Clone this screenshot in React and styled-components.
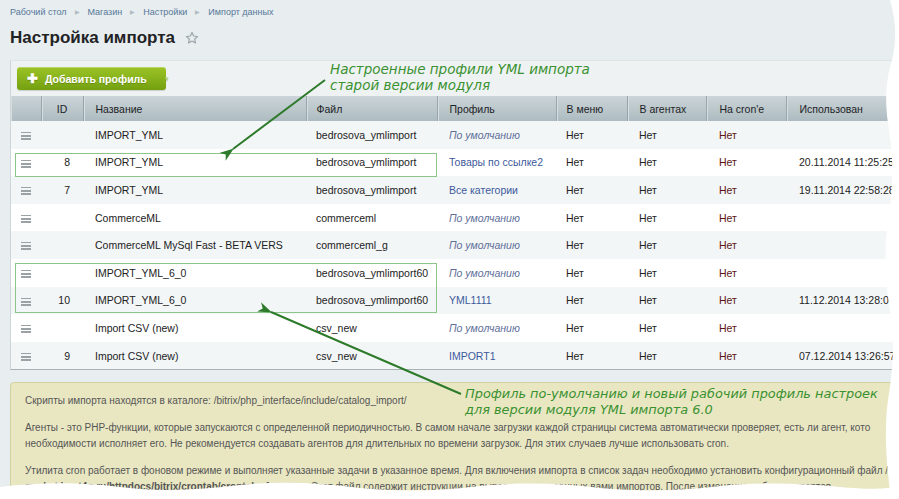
import styled, { createGlobalStyle } from 'styled-components';

const GlobalStyle = createGlobalStyle`
  html, body {
    margin: 0;
    padding: 0;
    background: #ffffff;
  }
  body {
    font-family: "Liberation Sans", Arial, sans-serif;
  }
`;

const Page = styled.div`
  position: relative;
  width: 899px;
  height: 499px;
  overflow: hidden;
  background: #e8edef;
  padding: 0 0 0 10px;
  box-sizing: border-box;
`;

const Breadcrumbs = styled.div`
  display: flex;
  align-items: center;
  gap: 8px;
  height: 23px;
  font-size: 9px;
  color: #56789a;
`;

const Sep = styled.span`
  color: #b0bbc2;
  font-size: 6px;
`;

const TitleRow = styled.div`
  display: flex;
  align-items: center;
  gap: 10px;
  height: 30px;

  h1 {
    margin: 0;
    font-size: 17px;
    font-weight: bold;
    color: #1f2326;
  }
`;

const Panel = styled.div`
  margin-top: 7px;
  border-left: 1px solid #cdd5d8;
  border-top: 1px solid #dde3e6;
  border-bottom: 1px solid #a9b3b7;
  background: #eef2f3;
`;

const Toolbar = styled.div`
  display: flex;
  align-items: center;
  height: 35px;
  padding-left: 6px;
`;

const AddButton = styled.button`
  display: flex;
  align-items: center;
  gap: 7px;
  height: 23px;
  width: 149px;
  padding: 0 0 0 10px;
  border: none;
  border-radius: 3px;
  background: linear-gradient(#9cc426, #74a010);
  box-shadow: inset 0 1px 0 rgba(255,255,255,0.3), 0 1px 1px rgba(0,0,0,0.15);
  color: #fff;
  font-family: "Liberation Sans", Arial, sans-serif;
  font-weight: bold;
  font-size: 10.5px;
  white-space: nowrap;
  text-shadow: 0 1px 0 rgba(0,0,0,0.2);

  .plus {
    font-size: 13px;
    line-height: 1;
  }

  .caret {
    margin-left: 10px;
    color: #b5d36a;
    font-size: 6px;
  }
`;

const Table = styled.table`
  width: 900px;
  border-collapse: collapse;
  table-layout: fixed;
  font-size: 10.5px;
  color: #222;
`;

const Th = styled.th`
  height: 25px;
  padding: 0 0 0 ${(p) => p.$pl ?? 12}px;
  text-align: ${(p) => p.$align || 'left'};
  font-weight: normal;
  color: #1d2326;
  background: linear-gradient(#cbd4d8, #adbbc0);
  border-right: 1px solid #98a6ab;
  box-shadow: inset 1px 0 0 #d6dee1;
`;

const Row = styled.tr`
  background: ${(p) => (p.$shade ? '#f3f6f7' : '#ffffff')};
`;

const Td = styled.td`
  height: 27.6px;
  padding: 0 0 0 ${(p) => p.$pl ?? 12}px;
  padding-right: ${(p) => p.$pr ?? 0}px;
  text-align: ${(p) => p.$align || 'left'};
  white-space: nowrap;
  overflow: hidden;
  color: ${(p) => p.$color || '#222'};
  font-style: ${(p) => (p.$italic ? 'italic' : 'normal')};
`;

const Burger = styled.span`
  display: inline-block;
  width: 10px;
  height: 8px;
  background: linear-gradient(#9aa2a6 0 1.5px, transparent 1.5px 3.25px, #9aa2a6 3.25px 4.75px, transparent 4.75px 6.5px, #9aa2a6 6.5px 8px);
  vertical-align: middle;
`;

const Note = styled.div`
  margin: 12px 0 0 0;
  padding: 10px 0 0 14px;
  height: 130px;
  background: #e9e7c2;
  border: 1px solid #d2cfa0;
  border-radius: 4px;
  font-size: 10px;
  line-height: 16px;
  color: #555;
  white-space: nowrap;
  overflow: hidden;

  p {
    margin: 0 0 11px 0;
  }
`;

const Overlay = styled.svg`
  position: absolute;
  left: 0;
  top: 0;
  pointer-events: none;
`;

const Callout = styled.div`
  position: absolute;
  left: ${(p) => p.$x}px;
  top: ${(p) => p.$y}px;
  font-family: "DejaVu Sans", sans-serif;
  font-style: italic;
  font-size: ${(p) => p.$size}px;
  line-height: 16px;
  color: #3a9130;
  white-space: nowrap;
`;

const Frame = styled.div`
  position: absolute;
  left: ${(p) => p.$x}px;
  top: ${(p) => p.$y}px;
  width: ${(p) => p.$w}px;
  height: ${(p) => p.$h}px;
  border: 1px solid #8cc48a;
  pointer-events: none;
`;

const cols = [30, 42, 223, 131, 119, 71, 79, 80, 125];

const DEF = 'По умолчанию';
const rows = [
  { id: '', name: 'IMPORT_YML', file: 'bedrosova_ymlimport', prof: DEF, used: '' },
  { id: '8', name: 'IMPORT_YML', file: 'bedrosova_ymlimport', prof: 'Товары по ссылке2', used: '20.11.2014 11:25:25' },
  { id: '7', name: 'IMPORT_YML', file: 'bedrosova_ymlimport', prof: 'Все категории', used: '19.11.2014 22:58:28' },
  { id: '', name: 'CommerceML', file: 'commerceml', prof: DEF, used: '' },
  { id: '', name: 'CommerceML MySql Fast - BETA VERS', file: 'commerceml_g', prof: DEF, used: '' },
  { id: '', name: 'IMPORT_YML_6_0', file: 'bedrosova_ymlimport60', prof: DEF, used: '' },
  { id: '10', name: 'IMPORT_YML_6_0', file: 'bedrosova_ymlimport60', prof: 'YML1111', used: '11.12.2014 13:28:08' },
  { id: '', name: 'Import CSV (new)', file: 'csv_new', prof: DEF, used: '' },
  { id: '9', name: 'Import CSV (new)', file: 'csv_new', prof: 'IMPORT1', used: '07.12.2014 13:26:57' },
];

function Star() {
  return (
    <svg width="14" height="14" viewBox="0 0 24 24">
      <path
        d="M12 2.5l2.9 6.1 6.6.8-4.9 4.6 1.3 6.6L12 17.3l-5.9 3.3 1.3-6.6-4.9-4.6 6.6-.8z"
        fill="none"
        stroke="#9aa4aa"
        strokeWidth="2"
        strokeLinejoin="round"
      />
    </svg>
  );
}

function App() {
  return (
    <Page>
      <GlobalStyle />
      <Breadcrumbs>
        <span>Рабочий стол</span>
        <Sep>▶</Sep>
        <span>Магазин</span>
        <Sep>▶</Sep>
        <span>Настройки</span>
        <Sep>▶</Sep>
        <span>Импорт данных</span>
      </Breadcrumbs>
      <TitleRow>
        <h1>Настройка импорта</h1>
        <Star />
      </TitleRow>

      <Panel>
        <Toolbar>
          <AddButton>
            <span className="plus">✚</span>
            <span>Добавить профиль</span>
            <span className="caret">▼</span>
          </AddButton>
        </Toolbar>
        <Table>
          <colgroup>
            {cols.map((w, i) => (
              <col key={i} style={{ width: w }} />
            ))}
          </colgroup>
          <thead>
            <tr>
              <Th $pl={0} />
              <Th $pl={0} $align="center">ID</Th>
              <Th>Название</Th>
              <Th $pl={10}>Файл</Th>
              <Th>Профиль</Th>
              <Th $pl={10}>В меню</Th>
              <Th>В агентах</Th>
              <Th $pl={13}>На cron'e</Th>
              <Th $pl={13}>Использован</Th>
            </tr>
          </thead>
          <tbody>
            {rows.map((r, i) => (
              <Row key={i} $shade={i % 2 === 0}>
                <Td $pl={10}><Burger /></Td>
                <Td $pl={0} $pr={13} $align="right">{r.id}</Td>
                <Td>{r.name}</Td>
                <Td $pl={10}>{r.file}</Td>
                <Td $italic={r.prof === DEF} $color={r.prof === DEF ? '#5f6f9a' : '#3d5a9c'}>{r.prof}</Td>
                <Td $pl={10}>Нет</Td>
                <Td>Нет</Td>
                <Td $pl={13} $color="#5a1414">Нет</Td>
                <Td $pl={13}>{r.used}</Td>
              </Row>
            ))}
          </tbody>
        </Table>
      </Panel>

      <Note>
        <p>Скрипты импорта находятся в каталоге: /bitrix/php_interface/include/catalog_import/</p>
        <p>
          Агенты - это PHP-функции, которые запускаются с определенной периодичностью. В самом начале загрузки каждой страницы система автоматически проверяет, есть ли агент, кото
          <br />
          необходимости исполняет его. Не рекомендуется создавать агентов для длительных по времени загрузок. Для этих случаев лучше использовать cron.
        </p>
        <p>
          Утилита cron работает в фоновом режиме и выполняет указанные задачи в указанное время. Для включения импорта в список задач необходимо установить конфигурационный файл /
          <br />
          <b>market.host4g.ru/httpdocs/bitrix/crontab/crontab.cfg</b> в cron. Этот файл содержит инструкции на выполнение указанных вами импортов. После изменения набора импортов
        </p>
      </Note>

      <Frame $x={15} $y={153} $w={420} $h={22} />
      <Frame $x={15} $y={263} $w={420} $h={48} />

      <Callout $x={330} $y={61} $size={13.5}>
        Настроенные профили YML импорта
        <br />
        старой версии модуля
      </Callout>
      <Callout $x={465} $y={386} $size={12.9}>
        Профиль по-умолчанию и новый рабочий профиль настроек
        <br />
        для версии модуля YML импорта 6.0
      </Callout>

      <Overlay width="899" height="499" viewBox="0 0 899 499">
        <defs>
          <marker id="head" markerWidth="14" markerHeight="10" refX="1" refY="5" orient="auto-start-reverse" markerUnits="userSpaceOnUse">
            <path d="M14 0 L0 5 L14 10 L10 5 Z" fill="#2d7a2a" />
          </marker>
        </defs>
        <line x1="325" y1="80" x2="233" y2="149" stroke="#2d7a2a" strokeWidth="2" markerEnd="url(#head)" />
        <line x1="461" y1="394" x2="271" y2="312" stroke="#2d7a2a" strokeWidth="2" markerEnd="url(#head)" />
        <path
          d="M899 0 L890 0 C896 20 897 40 892 60 C886 80 884 100 889 130 C894 160 893 190 888 220 C884 250 885 280 890 310 C895 340 893 370 888 400 C884 430 886 460 891 499 L899 499 Z"
          fill="#ffffff"
        />
        <path
          d="M0 499 L0 487 C40 482 80 482 120 487 C160 492 200 490 240 485 C280 481 320 483 360 488 C400 492 440 491 480 486 C520 482 560 483 600 488 C640 492 680 491 720 486 C760 482 800 483 840 487 C870 490 885 489 899 486 L899 499 Z"
          fill="#ffffff"
        />
      </Overlay>
    </Page>
  );
}

export default App;
